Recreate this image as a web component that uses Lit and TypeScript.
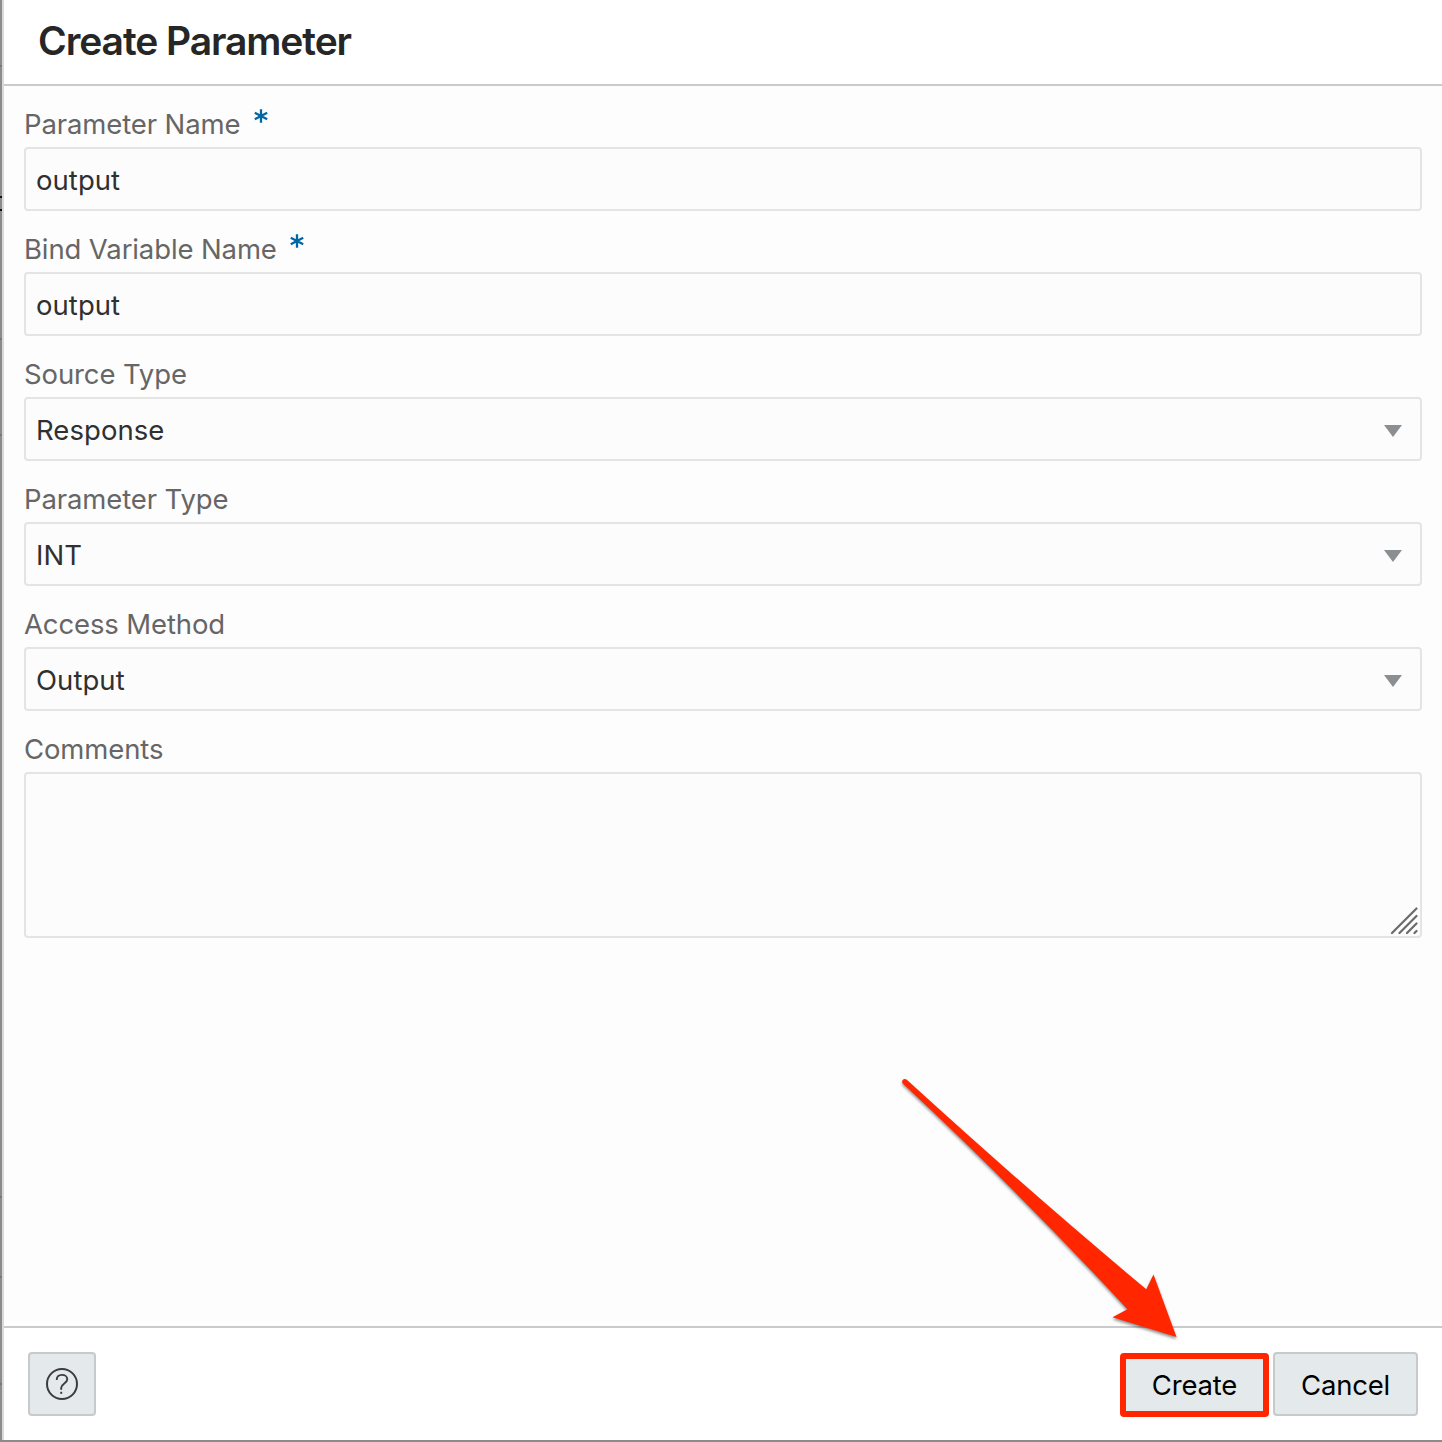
import { LitElement, html, css, svg, nothing } from "lit";
import { customElement, property } from "lit/decorators.js";

type Kind = "text" | "select" | "area";

interface Field {
  label: string;
  value: string;
  kind: Kind;
  required?: boolean;
}

const FIELDS: Field[] = [
  { label: "Parameter Name", value: "output", kind: "text", required: true },
  { label: "Bind Variable Name", value: "output", kind: "text", required: true },
  { label: "Source Type", value: "Response", kind: "select" },
  { label: "Parameter Type", value: "INT", kind: "select" },
  { label: "Access Method", value: "Output", kind: "select" },
  { label: "Comments", value: "", kind: "area" },
];

@customElement("form-field")
export class FormField extends LitElement {
  @property() label = "";
  @property() value = "";
  @property() kind: Kind = "text";
  @property({ type: Boolean }) required = false;

  static styles = css`
    :host {
      display: block;
    }
    .label {
      display: flex;
      box-sizing: border-box;
      height: 61px;
      padding-top: 21px;
      line-height: 34px;
      font-size: 27.5px;
      letter-spacing: -0.12px;
      color: #666;
      white-space: pre;
    }
    .star {
      width: 14px;
      height: 14px;
      margin: 2px 0 0 13.5px;
    }
    .box {
      display: flex;
      align-items: center;
      justify-content: space-between;
      box-sizing: border-box;
      height: 64px;
      padding: 2px 18px 0 10px;
      border: 2px solid #e4e4e4;
      border-radius: 4px;
      background: #fcfcfc;
      color: #303030;
      font-size: 27.5px;
      line-height: 34px;
      letter-spacing: 0.05px;
    }
    .area {
      height: 166px;
      align-items: flex-end;
      justify-content: flex-end;
      padding: 0 2px 1px 0;
    }
    .caret {
      width: 18px;
      height: 12px;
      display: block;
      margin-top: 2px;
    }
    .grip {
      width: 28px;
      height: 28px;
      display: block;
    }
  `;

  render() {
    return html`
      <div class="label"><span>${this.label}</span>${this.required
          ? html`<svg class="star" viewBox="0 0 14 14">
              <path d="M7 0.2V13.8M0.8 3.7L13.2 10.3M13.2 3.7L0.8 10.3" stroke="#0067a5" stroke-width="2.3" fill="none" />
            </svg>`
          : nothing}</div>
      <div class="box ${this.kind === "area" ? "area" : ""}">
        ${this.kind === "area"
          ? html`<svg class="grip" viewBox="0 0 28 28">
              <path d="M2 26L26.5 1.5M9.5 26L26.5 9M17 26L26.5 16.5M24.5 26L26.5 24" stroke="#6a6a6a" stroke-width="2.2" stroke-linecap="round" />
            </svg>`
          : html`<span>${this.value}</span>`}
        ${this.kind === "select"
          ? html`<svg class="caret" viewBox="0 0 18 12"><path d="M0 0H18L9 12Z" fill="#8b8f91" /></svg>`
          : nothing}
      </div>
    `;
  }
}

@customElement("app-root")
export class AppRoot extends LitElement {
  static styles = css`
    :host {
      display: block;
      position: relative;
      width: 1442px;
      height: 1442px;
      overflow: hidden;
      font-family: Inter, "Liberation Sans", sans-serif;
      background: #8b8b8b;
    }
    .frame {
      display: flex;
      box-sizing: border-box;
      height: 1440px;
    }
    .edge {
      width: 2px;
      flex: none;
    }
    .edge svg {
      display: block;
    }
    .dialog {
      flex: 1;
      display: flex;
      flex-direction: column;
      border-left: 2px solid #d9d9d9;
      background: #fdfdfd;
    }
    .head {
      box-sizing: border-box;
      height: 86px;
      padding: 17px 0 0 34px;
      border-bottom: 2px solid #cacaca;
      background: #fff;
    }
    .title {
      margin: 0;
      font-size: 39px;
      line-height: 48px;
      font-weight: 600;
      letter-spacing: -1.08px;
      color: #262626;
    }
    .body {
      flex: 1;
      padding: 0 20px;
    }
    .foot {
      display: flex;
      align-items: flex-start;
      box-sizing: border-box;
      height: 114px;
      padding: 24px 24px 0;
      border-top: 2px solid #cacaca;
      background: #fff;
    }
    .btn {
      display: flex;
      align-items: center;
      justify-content: center;
      box-sizing: border-box;
      height: 64px;
      margin: 0;
      padding: 2px 0 0;
      border: 2px solid #c7cacb;
      border-radius: 4px;
      background: #e4e9eb;
      color: #000;
      font-family: inherit;
      font-size: 27.5px;
      line-height: 34px;
      letter-spacing: -0.2px;
    }
    .help {
      width: 68px;
      padding: 0;
      margin-right: auto;
    }
    .create {
      width: 149px;
      margin: 1px 4px 0 0;
      padding-top: 0;
      border: 6px solid #ff2600;
    }
    .cancel {
      width: 145px;
    }
    .arrow {
      position: absolute;
      left: 890px;
      top: 1060px;
      filter: drop-shadow(0 2px 1.5px rgba(0, 0, 0, 0.45));
    }
  `;

  render() {
    return html`
      <div class="frame">
        <div class="edge">
          <svg width="2" height="1440" viewBox="0 0 2 1440">
            <rect width="2" height="1440" fill="#8b8b8b" />
            ${[66, 339, 435, 1197, 1277, 1384].map(
              (y) => svg`<rect y=${y - 1} width="2" height="2" fill="#777" />`
            )}
            <rect y="196" width="2" height="2" fill="#111" />
            <rect y="209" width="2" height="2" fill="#111" />
          </svg>
        </div>
        <div class="dialog">
          <div class="head"><h1 class="title">Create Parameter</h1></div>
          <div class="body">
            ${FIELDS.map(
              (f) => html`<form-field
                .label=${f.label}
                .value=${f.value}
                .kind=${f.kind}
                .required=${!!f.required}
              ></form-field>`
            )}
          </div>
          <div class="foot">
            <button class="btn help" aria-label="Help">
              <svg width="34" height="34" viewBox="0 0 34 34" fill="none" stroke="#3c3c3c">
                <circle cx="17" cy="17" r="15" stroke-width="2" />
                <path d="M11.7 13C11.7 9.5 13.9 7.9 17 7.9S22.3 9.7 22.3 12.3C22.3 16.3 16.2 16.6 16.2 20.8V22.8" stroke-width="1.9" />
                <path d="M16.2 24.8V26.8" stroke-width="2" />
              </svg>
            </button>
            <button class="btn create">Create</button>
            <button class="btn cancel">Cancel</button>
          </div>
        </div>
      </div>
      <svg class="arrow" width="310" height="290" viewBox="0 0 310 290">
        <path
          d="M16.8 19.8Q142 134 256.3 229.3L263.5 214.5L286.5 277L222.5 257.3L237.4 249.2Q128 131 12.8 23.6C10.8 20.5 14 17.6 16.8 19.8Z"
          fill="#ff2600"
        />
      </svg>
    `;
  }
}
